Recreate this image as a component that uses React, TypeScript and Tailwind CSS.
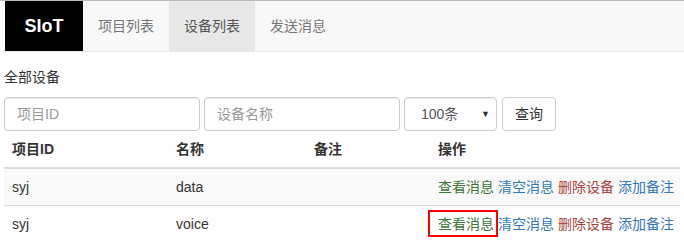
const FONT = {
  fontFamily: '"Liberation Sans", Arial, "Noto Sans CJK SC", sans-serif',
};

const NAV_ITEMS = [
  { label: "项目列表", active: false },
  { label: "设备列表", active: true },
  { label: "发送消息", active: false },
];

interface Device {
  project: string;
  name: string;
  note: string;
}

const DEVICES: Device[] = [
  { project: "syj", name: "data", note: "" },
  { project: "syj", name: "voice", note: "" },
];

function Actions({ marked }: { marked?: boolean }) {
  return (
    <div className="flex gap-[4px] whitespace-nowrap">
      <span className="relative text-[#3c763d]">
        查看消息
        {marked && (
          <span className="absolute left-[-10px] right-[-4px] top-[-4px] bottom-[-3px] border-2 border-[#ff0000]" />
        )}
      </span>
      <span className="text-[#337ab7]">清空消息</span>
      <span className="text-[#a94442]">删除设备</span>
      <span className="text-[#337ab7]">添加备注</span>
    </div>
  );
}

export default function App() {
  return (
    <div
      className="w-[684px] h-[240px] overflow-hidden bg-white text-[14px] leading-[20px] text-[#333]"
      style={FONT}
    >
      <div className="border-t border-[#bbbbbb]">
        <nav className="ml-[5px] flex h-[51px] border-b border-[#e7e7e7] bg-[#f8f8f8]">
          <div className="flex h-[50px] w-[78px] items-center justify-center bg-black text-[18px] font-bold text-white">
            SIoT
          </div>
          {NAV_ITEMS.map((item) => (
            <div
              key={item.label}
              className={
                item.active
                  ? "flex h-[50px] items-center px-[15px] bg-[#e7e7e7] text-[#555]"
                  : "flex h-[50px] items-center px-[15px] text-[#777]"
              }
            >
              {item.label}
            </div>
          ))}
        </nav>
      </div>

      <div className="px-[4px]">
        <div className="mt-[15px] mb-[10px]">全部设备</div>

        <div className="flex gap-[4px]">
          <div className="flex h-[34px] w-[196px] items-center rounded-[4px] border border-[#ccc] px-[12px] text-[#999] shadow-[inset_0_1px_1px_rgba(0,0,0,0.075)]">
            项目ID
          </div>
          <div className="flex h-[34px] w-[196px] items-center rounded-[4px] border border-[#ccc] px-[12px] text-[#999] shadow-[inset_0_1px_1px_rgba(0,0,0,0.075)]">
            设备名称
          </div>
          <div className="flex h-[34px] w-[93px] items-center justify-between rounded-[4px] border border-[#ccc] pl-[16px] pr-[6px] text-[#555] shadow-[inset_0_1px_1px_rgba(0,0,0,0.075)]">
            <span>100条</span>
            <span className="text-[9px] text-[#333]">▼</span>
          </div>
          <div className="ml-[1px] flex h-[34px] w-[54px] items-center justify-center rounded-[4px] border border-[#ccc] bg-white text-[#333]">
            查询
          </div>
        </div>

        <div className="grid grid-cols-[164px_138px_124px_1fr] font-bold border-b-2 border-[#ddd]">
          <div className="p-[8px]">项目ID</div>
          <div className="p-[8px]">名称</div>
          <div className="p-[8px]">备注</div>
          <div className="p-[8px]">操作</div>
        </div>

        {DEVICES.map((d, i) => (
          <div
            key={d.name}
            className={
              i % 2 === 0
                ? "grid grid-cols-[164px_138px_124px_1fr] bg-[#f9f9f9] border-b border-[#ddd]"
                : "grid grid-cols-[164px_138px_124px_1fr] border-b border-[#ddd]"
            }
          >
            <div className="p-[8px]">{d.project}</div>
            <div className="p-[8px]">{d.name}</div>
            <div className="p-[8px]">{d.note}</div>
            <div className="p-[8px]">
              <Actions marked={i === 1} />
            </div>
          </div>
        ))}
      </div>
    </div>
  );
}
